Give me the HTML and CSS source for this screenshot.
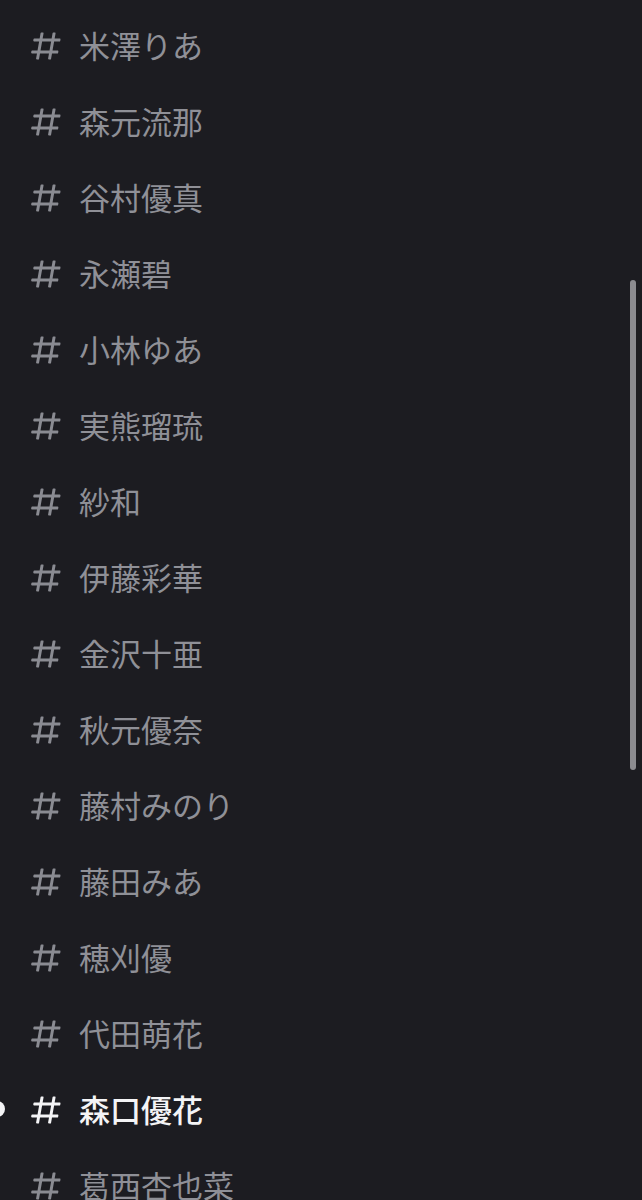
FILE: index.html
```html
<!DOCTYPE html>
<html lang="ja">
<head>
<meta charset="utf-8">
<link rel="stylesheet" href="styles.css">
</head>
<body>
<svg width="0" height="0" class="defs">
  <symbol id="hash" viewBox="0 0 24 24">
    <path fill="currentColor" fill-rule="evenodd" d="M5.88657 21C5.57547 21 5.3399 20.7189 5.39427 20.4126L6.00001 17H2.59511C2.28449 17 2.04905 16.7198 2.10259 16.4138L2.27759 15.4138C2.31946 15.1746 2.52722 15 2.77011 15H6.35001L7.41001 9H4.00511C3.69449 9 3.45905 8.71977 3.51259 8.41381L3.68759 7.41381C3.72946 7.17456 3.93722 7 4.18011 7H7.76001L8.39677 3.41262C8.43914 3.17391 8.64664 3 8.88907 3H9.87344C10.1845 3 10.4201 3.28107 10.3657 3.58738L9.76001 7H15.76L16.3968 3.41262C16.4391 3.17391 16.6466 3 16.8891 3H17.8734C18.1845 3 18.4201 3.28107 18.3657 3.58738L17.76 7H21.1649C21.4755 7 21.711 7.28023 21.6574 7.58619L21.4824 8.58619C21.4406 8.82544 21.2328 9 20.9899 9H17.41L16.35 15H19.7549C20.0655 15 20.301 15.2802 20.2474 15.5862L20.0724 16.5862C20.0306 16.8254 19.8228 17 19.5799 17H16L15.3632 20.5874C15.3209 20.8261 15.1134 21 14.8709 21H13.8866C13.5755 21 13.3399 20.7189 13.3943 20.4126L14 17H8.00001L7.36325 20.5874C7.32088 20.8261 7.11337 21 6.87094 21H5.88657ZM9.41045 9L8.35045 15H14.3504L15.4104 9H9.41045Z"/>
  </symbol>
</svg>
<ul class="channels">
  <li class="channel"><svg class="icon"><use href="#hash"/></svg><span class="name">米澤りあ</span></li>
  <li class="channel"><svg class="icon"><use href="#hash"/></svg><span class="name">森元流那</span></li>
  <li class="channel"><svg class="icon"><use href="#hash"/></svg><span class="name">谷村優真</span></li>
  <li class="channel"><svg class="icon"><use href="#hash"/></svg><span class="name">永瀬碧</span></li>
  <li class="channel"><svg class="icon"><use href="#hash"/></svg><span class="name">小林ゆあ</span></li>
  <li class="channel"><svg class="icon"><use href="#hash"/></svg><span class="name">実熊瑠琉</span></li>
  <li class="channel"><svg class="icon"><use href="#hash"/></svg><span class="name">紗和</span></li>
  <li class="channel"><svg class="icon"><use href="#hash"/></svg><span class="name">伊藤彩華</span></li>
  <li class="channel"><svg class="icon"><use href="#hash"/></svg><span class="name">金沢十亜</span></li>
  <li class="channel"><svg class="icon"><use href="#hash"/></svg><span class="name">秋元優奈</span></li>
  <li class="channel"><svg class="icon"><use href="#hash"/></svg><span class="name">藤村みのり</span></li>
  <li class="channel"><svg class="icon"><use href="#hash"/></svg><span class="name">藤田みあ</span></li>
  <li class="channel"><svg class="icon"><use href="#hash"/></svg><span class="name">穂刈優</span></li>
  <li class="channel"><svg class="icon"><use href="#hash"/></svg><span class="name">代田萌花</span></li>
  <li class="channel active"><span class="unread"></span><svg class="icon"><use href="#hash"/></svg><span class="name">森口優花</span></li>
  <li class="channel"><svg class="icon"><use href="#hash"/></svg><span class="name">葛西杏也菜</span></li>
</ul>
<div class="scrollbar"></div>
</body>
</html>
```
FILE: styles.css
```css
html, body {
  margin: 0;
  padding: 0;
  height: 1200px;
  overflow: hidden;
  background: #1c1c21;
}
body {
  position: relative;
  font-family: "Noto Sans CJK JP", "Noto Sans", sans-serif;
}
.defs {
  position: absolute;
  width: 0;
  height: 0;
}
.channels {
  list-style: none;
  margin: 0;
  padding: 6px 0 0 0;
  display: flex;
  flex-direction: column;
}
.channel {
  position: relative;
  height: 76px;
  display: flex;
  align-items: center;
  padding-left: 28px;
  gap: 15px;
  color: #8f9097;
}
.icon {
  width: 36px;
  height: 36px;
  flex: none;
  margin-top: 3px;
  color: #8a8b92;
}
.name {
  font-size: 31px;
  line-height: 1;
  white-space: nowrap;
}
.active .name,
.active .icon {
  color: #f4f4f6;
}
.active .name {
  font-weight: 500;
}
.unread {
  position: absolute;
  left: -11px;
  top: 31px;
  width: 16px;
  height: 16px;
  border-radius: 50%;
  background: #f4f4f6;
}
.scrollbar {
  position: absolute;
  right: 6px;
  top: 280px;
  width: 6px;
  height: 490px;
  border-radius: 3px;
  background: #8b8b90;
}
```
